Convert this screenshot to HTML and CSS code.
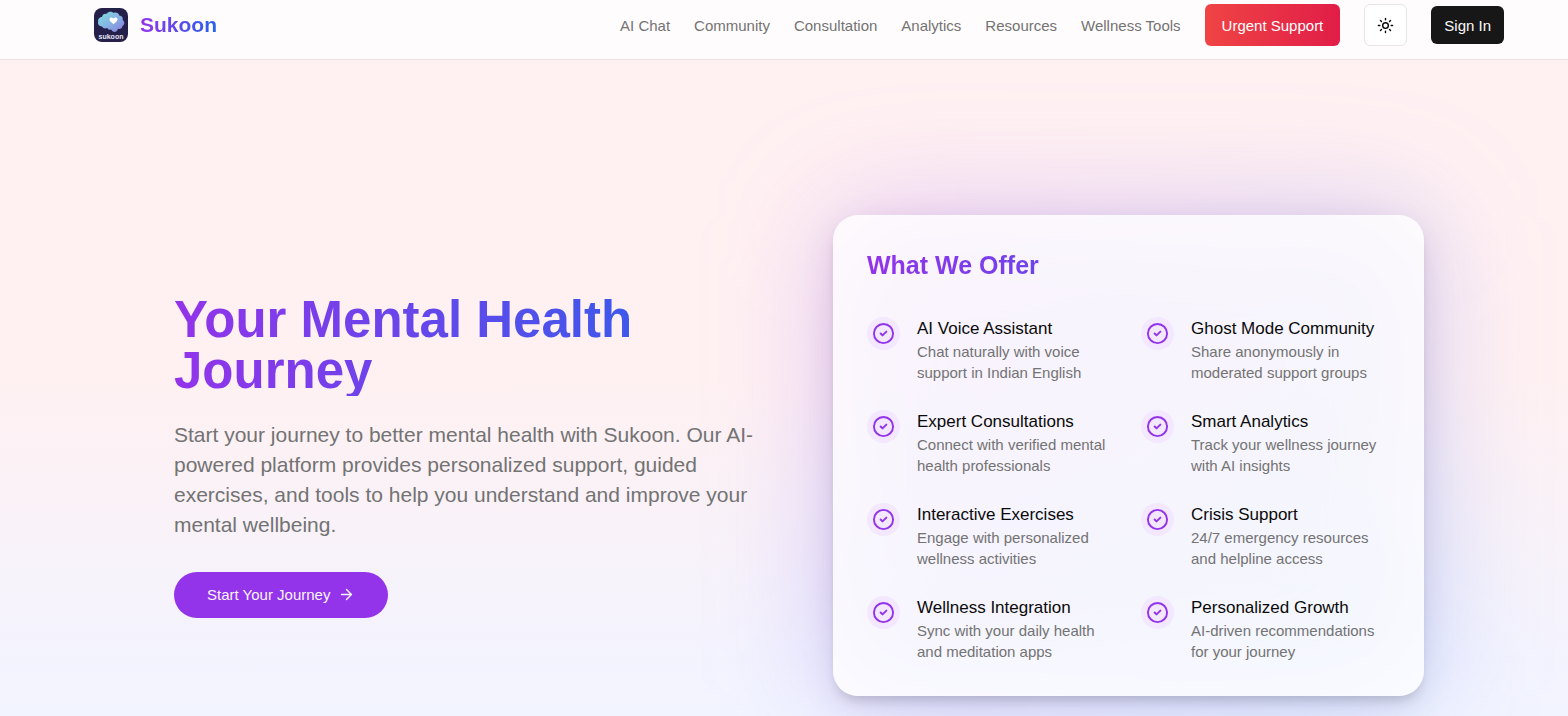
FILE: index.html
```html
<!DOCTYPE html>
<html lang="en">
<head>
<meta charset="utf-8">
<title>Sukoon</title>
<meta name="viewport" content="width=device-width, initial-scale=1">
<link rel="stylesheet" href="styles.css">
</head>
<body>
<svg class="sprite" aria-hidden="true">
  <symbol id="check" viewBox="0 0 24 24"><circle cx="12" cy="12" r="10"/><path d="m9 12 2 2 4-4"/></symbol>
</svg>
<header class="header">
  <a class="brand" href="#">
    <svg class="brand-logo" viewBox="0 0 34 34" role="img" aria-label="Sukoon logo">
      <defs>
        <linearGradient id="cloud" x1="0" y1="0" x2="1" y2="1">
          <stop offset="0" stop-color="#7fe0dc"/><stop offset=".5" stop-color="#86b4e4"/><stop offset="1" stop-color="#8a78d8"/>
        </linearGradient>
      </defs>
      <rect width="34" height="34" rx="8" fill="#25204a"/>
      <path fill="url(#cloud)" d="M8 18.500C5 18.500 3.500 16 4.200 13.800C3.600 11.200 5.500 9 8 9C8.300 6.300 10.700 5.200 12.700 5.800C14.500 3.300 18 3.300 19.500 5C22 3.800 24.800 5 25.300 7.500C28 7.800 29.300 10 28.700 12C31 13.500 30.800 17 28.500 18C28.500 20.500 26 21.500 24 20.700C23 24.500 18.800 25 17.500 21.800C15.500 22 14 21.500 13.300 20C11.500 21 9 20.500 8 18.500Z"/>
      <path fill="#fff" d="M19.500 16.300 16 12.900C14.200 10.800 17.200 7.900 19.500 10.500C21.800 7.900 24.800 10.800 23 12.900Z"/>
      <text class="logo-text" x="17" y="31" text-anchor="middle">sukoon</text>
    </svg>
    <span class="brand-name gradient-text">Sukoon</span>
  </a>
  <nav class="nav">
    <a href="#">AI Chat</a>
    <a href="#">Community</a>
    <a href="#">Consultation</a>
    <a href="#">Analytics</a>
    <a href="#">Resources</a>
    <a href="#">Wellness Tools</a>
    <button class="urgent" type="button">Urgent Support</button>
    <button class="theme" type="button" aria-label="Toggle theme">
      <svg viewBox="0 0 24 24"><circle cx="12" cy="12" r="4"/><path d="M12 2v2M12 20v2M4.930 4.930l1.410 1.410M17.660 17.660l1.410 1.410M2 12h2M20 12h2M6.340 17.660l-1.410 1.410M19.070 4.930l-1.410 1.410"/></svg>
    </button>
    <button class="signin" type="button">Sign In</button>
  </nav>
</header>
<main class="hero">
  <div class="hero-grid">
    <section class="intro">
      <h1 class="gradient-text">Your Mental Health Journey</h1>
      <p>Start your journey to better mental health with Sukoon. Our AI-powered platform provides personalized support, guided exercises, and tools to help you understand and improve your mental wellbeing.</p>
      <button class="start" type="button">Start Your Journey
        <svg viewBox="0 0 24 24"><path d="M5 12h14M12 5l7 7-7 7"/></svg>
      </button>
    </section>
    <div class="offer-wrap">
      <section class="offer">
        <h2 class="gradient-text">What We Offer</h2>
        <ul class="features">
          <li><span class="tick"><svg><use href="#check"/></svg></span><div><h3>AI Voice Assistant</h3><p>Chat naturally with voice support in Indian English</p></div></li>
          <li><span class="tick"><svg><use href="#check"/></svg></span><div><h3>Ghost Mode Community</h3><p>Share anonymously in moderated support groups</p></div></li>
          <li><span class="tick"><svg><use href="#check"/></svg></span><div><h3>Expert Consultations</h3><p>Connect with verified mental health professionals</p></div></li>
          <li><span class="tick"><svg><use href="#check"/></svg></span><div><h3>Smart Analytics</h3><p>Track your wellness journey with AI insights</p></div></li>
          <li><span class="tick"><svg><use href="#check"/></svg></span><div><h3>Interactive Exercises</h3><p>Engage with personalized wellness activities</p></div></li>
          <li><span class="tick"><svg><use href="#check"/></svg></span><div><h3>Crisis Support</h3><p>24/7 emergency resources and helpline access</p></div></li>
          <li><span class="tick"><svg><use href="#check"/></svg></span><div><h3>Wellness Integration</h3><p>Sync with your daily health and meditation apps</p></div></li>
          <li><span class="tick"><svg><use href="#check"/></svg></span><div><h3>Personalized Growth</h3><p>AI-driven recommendations for your journey</p></div></li>
        </ul>
      </section>
    </div>
  </div>
</main>
</body>
</html>
```
FILE: styles.css
```css
* { box-sizing: border-box; }

body {
  margin: 0;
  min-height: 100vh;
  font-family: "Liberation Sans", Arial, sans-serif;
  font-size: 15px;
  color: #0a0a0a;
  background: linear-gradient(180deg, #fff1f2 0, #fff1f2 380px, #f3f3fe 660px, #f2f4ff 100%);
}

h1, h2, h3, p, ul { margin: 0; padding: 0; }
button { font: inherit; border: 0; cursor: pointer; }
svg { fill: none; stroke: currentColor; stroke-width: 2; stroke-linecap: round; stroke-linejoin: round; }
.sprite { display: none; }

.gradient-text {
  background: linear-gradient(90deg, #9333ea, #2563eb);
  -webkit-background-clip: text;
  background-clip: text;
  color: transparent;
}

.header {
  display: flex;
  align-items: center;
  justify-content: space-between;
  padding: 4px 64px 13px 94px;
  background: rgba(255, 255, 255, 0.8);
  border-bottom: 1px solid #eee2e5;
}
.brand { display: flex; align-items: center; gap: 12px; text-decoration: none; }
.brand-logo { width: 34px; height: 34px; stroke: none; }
.logo-text { font-size: 7px; font-weight: 700; fill: #e8e6f5; }
.brand-name { font-size: 21px; font-weight: 700; line-height: 30px; }

.nav { display: flex; align-items: center; gap: 24px; }
.nav a { color: #737373; text-decoration: none; white-space: nowrap; }
.urgent {
  height: 42px;
  padding: 0 17px;
  border-radius: 6px;
  color: #fff;
  background: linear-gradient(90deg, #ef4444, #e11d48);
}
.theme {
  display: grid;
  place-items: center;
  width: 43px;
  height: 42px;
  padding: 0;
  border: 1px solid #e8e5e7;
  border-radius: 6px;
  background: #fff;
  color: #0a0a0a;
}
.theme svg { width: 17px; height: 17px; }
.signin { height: 38px; padding: 0 13px; border-radius: 6px; background: #171717; color: #fafafa; }

.hero { padding: 155px 144px 20px 174px; overflow: hidden; }
.hero-grid {
  display: grid;
  grid-template-columns: 1fr 1fr;
  gap: 68px;
  align-items: center;
}
.intro h1 { font-size: 51px; line-height: 51px; font-weight: 700; margin-bottom: 24px; }
.intro p { font-size: 21px; line-height: 30px; color: #737373; margin-bottom: 32px; }
.start {
  display: flex;
  align-items: center;
  gap: 8px;
  height: 46px;
  padding: 0 33px;
  border-radius: 23px;
  background: #9333ea;
  color: #faf5ff;
}
.start svg { width: 17px; height: 17px; }

.offer-wrap { position: relative; }
.offer-wrap::before {
  content: "";
  position: absolute;
  inset: 0;
  border-radius: 25px;
  background: linear-gradient(135deg, rgba(168, 85, 247, 0.32), rgba(59, 130, 246, 0.28));
  filter: blur(60px);
}
.offer {
  position: relative;
  padding: 34px;
  border-radius: 25px;
  background: rgba(255, 255, 255, 0.8);
  box-shadow: 0 8px 34px rgba(40, 20, 80, 0.1), 0 8px 12px -4px rgba(0, 0, 0, 0.16);
}
.offer h2 { font-size: 25px; line-height: 33px; font-weight: 700; margin-bottom: 35px; }
.features {
  display: grid;
  grid-template-columns: 1fr 1fr;
  gap: 27px 25px;
  list-style: none;
}
.features li { display: flex; align-items: flex-start; gap: 17px; }
.features h3 { font-size: 17px; line-height: 24px; font-weight: 400; }
.features p { font-size: 15px; line-height: 21px; color: #737373; }
.tick {
  flex: none;
  display: grid;
  place-items: center;
  width: 33px;
  height: 33px;
  border-radius: 50%;
  background: #f3e8ff;
  color: #9333ea;
}
.tick svg { width: 23px; height: 23px; }
```
